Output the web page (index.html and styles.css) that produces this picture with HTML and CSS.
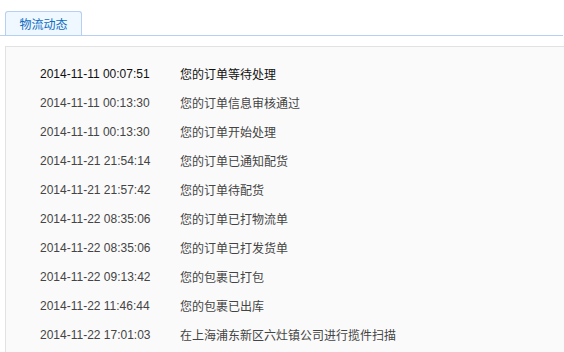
FILE: index.html
```html
<!DOCTYPE html>
<html>
<head>
<meta charset="utf-8">
<link rel="stylesheet" href="styles.css">
</head>
<body>
<div class="tabs">
  <div class="tab">物流动态</div>
</div>
<div class="panel">
  <ul class="log">
    <li class="row current"><span class="time">2014-11-11 00:07:51</span><span class="msg">您的订单等待处理</span></li>
    <li class="row"><span class="time">2014-11-11 00:13:30</span><span class="msg">您的订单信息审核通过</span></li>
    <li class="row"><span class="time">2014-11-11 00:13:30</span><span class="msg">您的订单开始处理</span></li>
    <li class="row"><span class="time">2014-11-21 21:54:14</span><span class="msg">您的订单已通知配货</span></li>
    <li class="row"><span class="time">2014-11-21 21:57:42</span><span class="msg">您的订单待配货</span></li>
    <li class="row"><span class="time">2014-11-22 08:35:06</span><span class="msg">您的订单已打物流单</span></li>
    <li class="row"><span class="time">2014-11-22 08:35:06</span><span class="msg">您的订单已打发货单</span></li>
    <li class="row"><span class="time">2014-11-22 09:13:42</span><span class="msg">您的包裹已打包</span></li>
    <li class="row"><span class="time">2014-11-22 11:46:44</span><span class="msg">您的包裹已出库</span></li>
    <li class="row"><span class="time">2014-11-22 17:01:03</span><span class="msg">在上海浦东新区六灶镇公司进行揽件扫描</span></li>
  </ul>
</div>
</body>
</html>
```

FILE: styles.css
```css
html, body {
  margin: 0;
  padding: 0;
  background: #fff;
  font-family: "Liberation Sans", "Noto Sans CJK SC", sans-serif;
  font-size: 12px;
  overflow: hidden;
}
.tabs {
  display: flex;
  padding: 11px 0 0 5px;
  margin-right: 1px;
  border-bottom: 1px solid #b7cff3;
}
.tab {
  width: 75px;
  height: 23px;
  line-height: 23px;
  text-align: center;
  color: #0b6cc2;
  background: #eff7ff;
  border: 1px solid #b7cff3;
  border-bottom: none;
  border-radius: 3px 3px 0 0;
  font-family: "Noto Sans CJK SC", sans-serif;
}
.panel {
  box-sizing: border-box;
  margin: 10px 0 0 5px;
  background: #fafafa;
  border: 1px solid #e2e2e2;
  border-right: none;
  border-bottom: none;
  padding-top: 12px;
  height: 306px;
}
.log {
  list-style: none;
  margin: 0;
  padding: 0 0 0 34px;
}
.row {
  display: flex;
  height: 29px;
  align-items: center;
  color: #444;
}
.row.current {
  color: #111;
}
.time {
  width: 140px;
  font-family: "Liberation Sans", sans-serif;
}
.msg {
  font-family: "Noto Sans CJK SC", sans-serif;
}
```
